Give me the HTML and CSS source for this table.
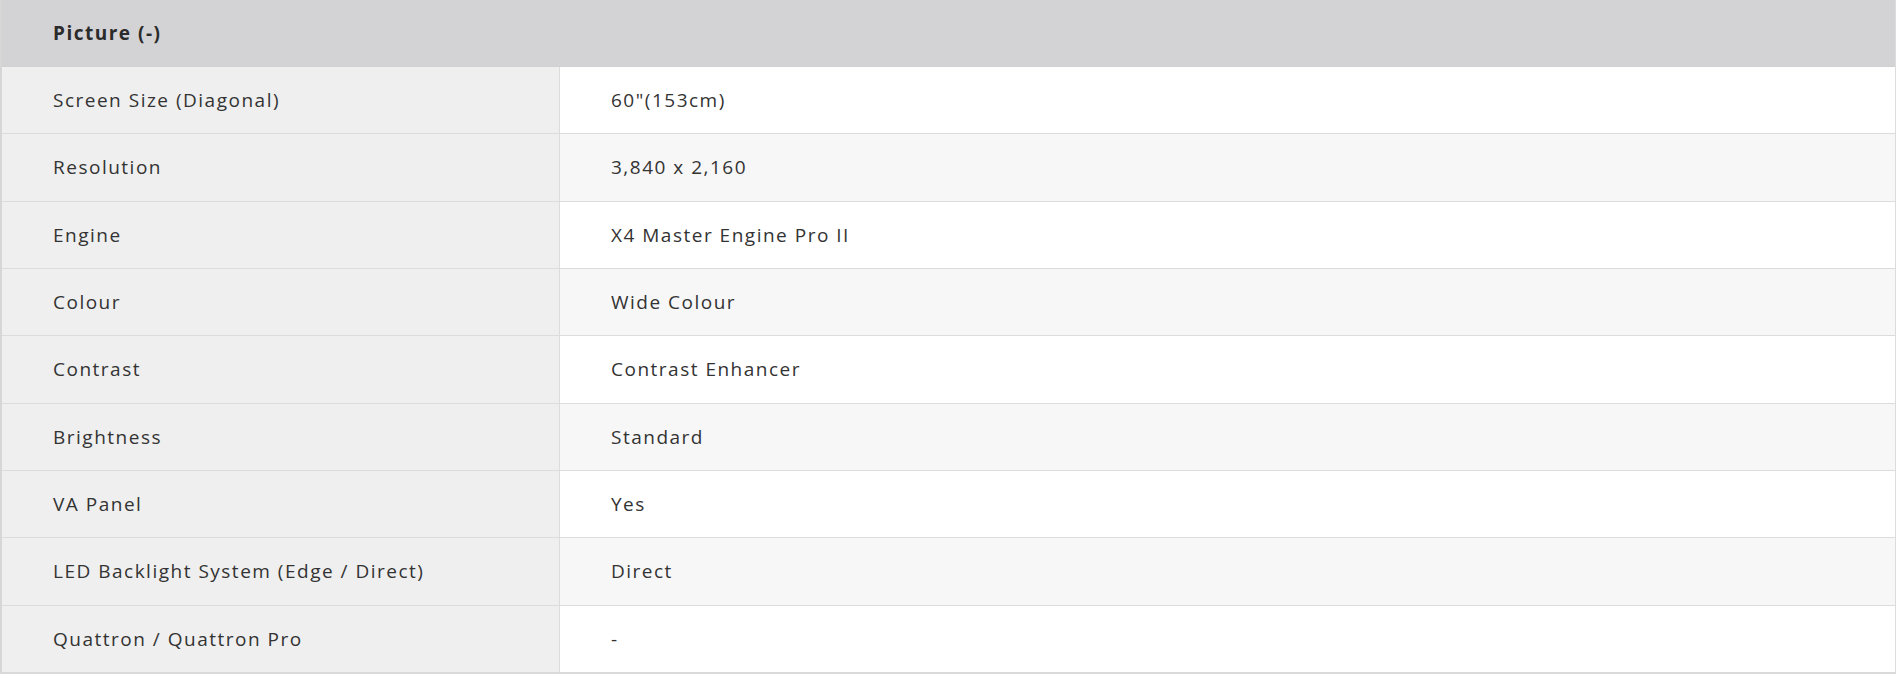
FILE: index.html
```html
<!DOCTYPE html>
<html>
<head>
<meta charset="utf-8">
<link rel="stylesheet" href="styles.css">
</head>
<body>
<div class="spec">
  <div class="spec-head">Picture (-)</div>
  <div class="spec-row odd"><div class="spec-key">Screen Size (Diagonal)</div><div class="spec-val">60"(153cm)</div></div>
  <div class="spec-row even"><div class="spec-key">Resolution</div><div class="spec-val">3,840 x 2,160</div></div>
  <div class="spec-row odd"><div class="spec-key">Engine</div><div class="spec-val">X4 Master Engine Pro II</div></div>
  <div class="spec-row even"><div class="spec-key">Colour</div><div class="spec-val">Wide Colour</div></div>
  <div class="spec-row odd"><div class="spec-key">Contrast</div><div class="spec-val">Contrast Enhancer</div></div>
  <div class="spec-row even"><div class="spec-key">Brightness</div><div class="spec-val">Standard</div></div>
  <div class="spec-row odd"><div class="spec-key">VA Panel</div><div class="spec-val">Yes</div></div>
  <div class="spec-row even"><div class="spec-key">LED Backlight System (Edge / Direct)</div><div class="spec-val">Direct</div></div>
  <div class="spec-row odd"><div class="spec-key">Quattron / Quattron Pro</div><div class="spec-val">-</div></div>
</div>
</body>
</html>
```
FILE: styles.css
```css
html, body {
  margin: 0;
  padding: 0;
  background: #ffffff;
}
body {
  font-family: "Open Sans", "Noto Sans", sans-serif;
  color: #333333;
}
.spec {
  width: 1893px;
  border-left: 2px solid #d6d6d6;
  border-right: 1px solid #dcdcdc;
  border-bottom: 2px solid #dadada;
}
.spec-head {
  height: 66px;
  display: flex;
  align-items: center;
  padding-left: 51px;
  background: #d3d3d5;
  font-weight: 700;
  font-size: 19px;
  letter-spacing: 1.5px;
  color: #2b2b2b;
  border-bottom: 1px solid #d0d0d0;
}
.spec-row {
  display: flex;
  height: 66.33px;
  border-bottom: 1px solid #dcdcdc;
  font-size: 19px;
  letter-spacing: 1.5px;
}
.spec-row:last-child {
  border-bottom: none;
}
.spec-key {
  width: 506px;
  flex: none;
  display: flex;
  align-items: center;
  padding-left: 51px;
  background: #efefef;
  border-right: 1px solid #dcdcdc;
}
.spec-val {
  flex: 1;
  display: flex;
  align-items: center;
  padding-left: 51px;
}
.odd .spec-val { background: #ffffff; }
.even .spec-val { background: #f7f7f7; }
```
